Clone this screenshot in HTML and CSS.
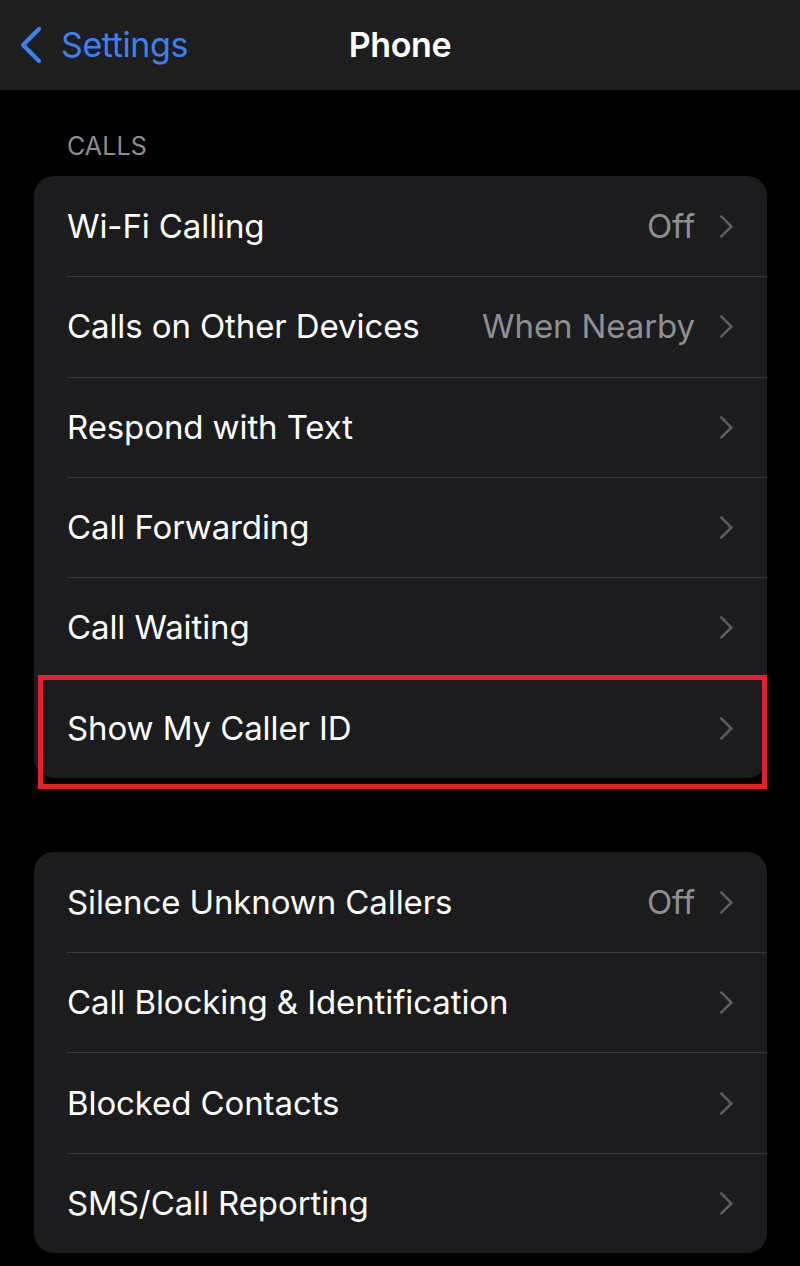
FILE: index.html
```html
<!DOCTYPE html>
<html lang="en">
<head>
<meta charset="utf-8">
<title>Phone</title>
<link rel="stylesheet" href="styles.css">
</head>
<body>
<div class="screen">
  <header class="navbar">
    <a class="back" href="#">
      <svg class="back-icon" width="26" height="38" viewBox="0 0 26 38" aria-hidden="true">
        <path d="M22 3 L6 19 L22 35" fill="none" stroke="#3b82f0" stroke-width="4.2" stroke-linecap="round" stroke-linejoin="round"/>
      </svg>
      <span class="back-label">Settings</span>
    </a>
    <h1 class="title">Phone</h1>
  </header>

  <main class="content">
    <div class="section-header">CALLS</div>
    <ul class="group group-calls">
      <li class="row"><span class="label">Wi-Fi Calling</span><span class="value">Off</span><span class="chev"></span></li>
      <li class="row"><span class="label">Calls on Other Devices</span><span class="value">When Nearby</span><span class="chev"></span></li>
      <li class="row"><span class="label">Respond with Text</span><span class="chev"></span></li>
      <li class="row"><span class="label">Call Forwarding</span><span class="chev"></span></li>
      <li class="row"><span class="label">Call Waiting</span><span class="chev"></span></li>
      <li class="row"><span class="label">Show My Caller ID</span><span class="chev"></span></li>
    </ul>

    <ul class="group group-block">
      <li class="row"><span class="label">Silence Unknown Callers</span><span class="value">Off</span><span class="chev"></span></li>
      <li class="row"><span class="label">Call Blocking &amp; Identification</span><span class="chev"></span></li>
      <li class="row"><span class="label">Blocked Contacts</span><span class="chev"></span></li>
      <li class="row"><span class="label">SMS/Call Reporting</span><span class="chev"></span></li>
    </ul>
  </main>

  <div class="highlight" aria-hidden="true"></div>
</div>
</body>
</html>
```

FILE: styles.css
```css
* { box-sizing: border-box; }

html, body {
  margin: 0;
  padding: 0;
  background: #000;
}

body {
  font-family: "Inter", "Roboto", "Liberation Sans", sans-serif;
  color: #fff;
  -webkit-font-smoothing: antialiased;
}

.screen {
  position: relative;
  width: 800px;
  min-height: 1266px;
  background: #000;
}

.navbar {
  position: relative;
  height: 90px;
  background: #1e1e1f;
  display: flex;
  align-items: center;
  justify-content: center;
}

.back {
  position: absolute;
  left: 17px;
  top: 26px;
  display: flex;
  align-items: center;
  gap: 18px;
  color: #3b82f0;
  text-decoration: none;
}

.back-icon { display: block; }

.back-label {
  font-size: 34px;
  font-weight: 400;
  letter-spacing: -0.4px;
  line-height: 38px;
}

.title {
  margin: 0;
  font-size: 34px;
  font-weight: 600;
  letter-spacing: -0.4px;
  line-height: 38px;
}

.content {
  padding: 0 33px 0 34px;
}

.section-header {
  padding: 41px 0 0 33px;
  height: 86px;
  font-size: 25px;
  color: #8d8d93;
  letter-spacing: 0.1px;
  line-height: 30px;
}

.group {
  list-style: none;
  margin: 0;
  padding: 0;
  background: #1c1c1e;
  border-radius: 20px;
  overflow: hidden;
}

.group-block {
  margin-top: 74px;
}

.row {
  position: relative;
  height: 100.3px;
  display: flex;
  align-items: center;
  padding: 0 34px 0 33px;
}

.row + .row::before {
  content: "";
  position: absolute;
  left: 33px;
  right: 0;
  top: 0;
  height: 1px;
  background: #38383a;
}

.label {
  flex: 1;
  font-size: 33px;
  letter-spacing: -0.1px;
  color: #fff;
  white-space: nowrap;
}

.value {
  font-size: 33px;
  letter-spacing: -0.1px;
  color: #8e8e93;
  margin-right: 24px;
  white-space: nowrap;
}

.chev {
  width: 14px;
  height: 24px;
  position: relative;
}

.chev::before {
  content: "";
  position: absolute;
  left: -6px;
  top: 4px;
  width: 14px;
  height: 14px;
  border-top: 3.2px solid #5b5b60;
  border-right: 3.2px solid #5b5b60;
  transform: rotate(45deg);
  border-radius: 1px;
}

.highlight {
  position: absolute;
  left: 38px;
  top: 675px;
  width: 729px;
  height: 114px;
  border: 5px solid #e5202b;
  pointer-events: none;
}
```
